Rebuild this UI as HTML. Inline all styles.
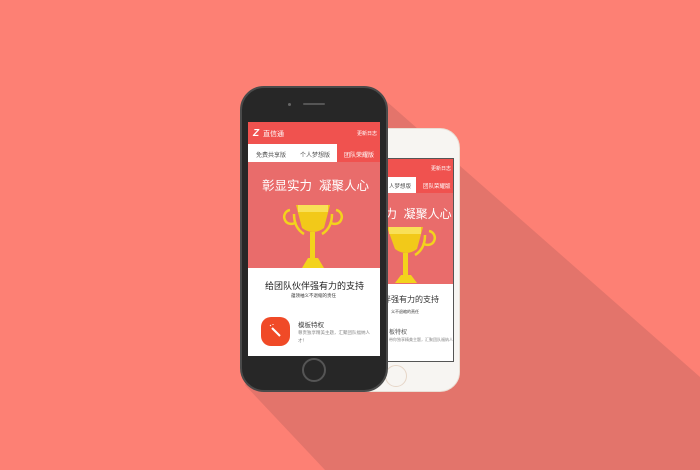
<!DOCTYPE html>
<html><head><meta charset="utf-8"><style>
*{margin:0;padding:0;box-sizing:border-box}
body{width:700px;height:470px;overflow:hidden;background:#fd8074;position:relative;font-family:"Liberation Sans","Noto Sans CJK SC",sans-serif}
.abs{position:absolute;white-space:nowrap}
</style></head><body>
<svg class="abs" style="left:0;top:0" width="700" height="470">
<polygon points="385,100 700,377 700,470 325,470 245,385" fill="#e3746b"/>
</svg>

<!-- white phone -->
<div class="abs" style="left:340px;top:128px;width:120px;height:264px;background:#f7f5f2;border-radius:20px;border:1px solid #eadfd5"></div>
<div class="abs" style="left:360px;top:158px;width:94px;height:204px;background:#fff;border:1px solid #555;overflow:hidden">
 <div class="abs" style="left:0;top:0;width:94px;height:18px;background:#f0524f;color:#fff;font-size:5px;text-align:right;padding:6px 4px 0 0">更新日志</div>
 <div class="abs" style="left:0;top:18px;width:94px;height:16px;background:#f0524f"></div>
 <div class="abs" style="left:0;top:18px;width:55px;height:16px;background:#fff;color:#555;font-size:5.5px;padding:5px 0 0 28px">人梦想版</div>
 <div class="abs" style="left:62px;top:23px;color:#fff;font-size:5.5px">团队荣耀版</div>
 <div class="abs" style="left:0;top:34px;width:94px;height:91px;background:#e96c6b"></div>
 <div class="abs" style="left:24px;top:46px;color:#fff;font-size:12px">力&nbsp;&nbsp;凝聚人心</div>
 <svg class="abs" style="left:12px;top:68px" width="70" height="58" viewBox="0 0 70 58">
  <path d="M56 4 a7 7 0 1 1 -6 12" stroke="#f3d31c" stroke-width="2.5" fill="none"/>
  <path d="M52 8 q0 14 -10 20" stroke="#f3d31c" stroke-width="2.5" fill="none"/>
  <path d="M14 0 H50 L44 22 Q33 30 22 22 Z" fill="#f2c919"/>
  <rect x="16" y="0" width="32" height="7" fill="#f9e057"/>
  <rect x="30" y="26" width="5" height="22" fill="#f3d31c"/>
  <path d="M22 56 L28 48 H38 L44 56 Z" fill="#f3d31c"/>
 </svg>
 <div class="abs" style="left:22px;top:135px;color:#333;font-size:8px">伴强有力的支持</div>
 <div class="abs" style="left:30px;top:150px;color:#333;font-size:4px">义不退缩的责任</div>
 <div class="abs" style="left:28px;top:168px;color:#555;font-size:6px">板特权</div>
 <div class="abs" style="left:28px;top:178px;color:#888;font-size:4px">带你独享精美主题，汇聚团队福纳人</div>
</div>
<div class="abs" style="left:385px;top:365px;width:22px;height:22px;border-radius:50%;border:1px solid #e6d6c8"></div>

<!-- black phone -->
<div class="abs" style="left:240px;top:86px;width:148px;height:306px;background:#272727;border-radius:24px;border:2px solid #4a4a4a"></div>
<div class="abs" style="left:288px;top:103px;width:3px;height:3px;border-radius:50%;background:#666"></div>
<div class="abs" style="left:303px;top:103px;width:22px;height:2px;border-radius:1px;background:#555"></div>
<div class="abs" style="left:302px;top:358px;width:24px;height:24px;border-radius:50%;border:2px solid #555"></div>
<div class="abs" style="left:248px;top:122px;width:132px;height:234px;background:#fff;overflow:hidden">
 <div class="abs" style="left:0;top:0;width:132px;height:22px;background:#f0524f"></div>
 <div class="abs" style="left:5px;top:6px;color:#fff;font-size:10px;font-weight:bold;font-style:italic">Z</div>
 <div class="abs" style="left:15px;top:7px;color:#fff;font-size:7px">直信通</div>
 <div class="abs" style="left:109px;top:8px;color:#fff;font-size:5px">更新日志</div>
 <div class="abs" style="left:0;top:22px;width:132px;height:18px;background:#fff"></div>
 <div class="abs" style="left:8px;top:28px;color:#555;font-size:6px">免费共享版</div>
 <div class="abs" style="left:52px;top:28px;color:#555;font-size:6px">个人梦想版</div>
 <div class="abs" style="left:89px;top:22px;width:43px;height:18px;background:#f0524f"></div>
 <div class="abs" style="left:96px;top:28px;color:#fff;font-size:6px">团队荣耀版</div>
 <div class="abs" style="left:0;top:40px;width:132px;height:106px;background:#e96c6b"></div>
 <div class="abs" style="left:14px;top:53px;color:#fff;font-size:12.5px">彰显实力&nbsp;&nbsp;凝聚人心</div>
 <svg class="abs" style="left:32px;top:80px" width="66" height="66" viewBox="0 0 66 66">
  <path d="M10 8 a7 7 0 1 0 6 12 M56 8 a7 7 0 1 1 -6 12" stroke="#f3d31c" stroke-width="2.5" fill="none"/>
  <path d="M14 12 q0 14 10 20 M52 12 q0 14 -10 20" stroke="#f3d31c" stroke-width="2.5" fill="none"/>
  <path d="M16 3 H50 L44 26 Q33 34 22 26 Z" fill="#f2c919"/>
  <rect x="18" y="3" width="30" height="7" fill="#f9e057"/>
  <rect x="30" y="30" width="5" height="26" fill="#f3d31c"/>
  <path d="M22 66 L28 56 H38 L44 66 Z" fill="#f3d31c"/>
 </svg>
 <div class="abs" style="left:17px;top:157px;color:#222;font-size:9px">给团队伙伴强有力的支持</div>
 <div class="abs" style="left:43px;top:171px;color:#333;font-size:4.5px">蕴领袖义不退缩的责任</div>
 <div class="abs" style="left:13px;top:195px;width:29px;height:29px;border-radius:10px;background:#f04a27"></div>
 <svg class="abs" style="left:19px;top:201px" width="17" height="17"><path d="M5 5 L13 13" stroke="#fff" stroke-width="2"/><path d="M3 2 l1 1 M6 1 l0 1" stroke="#fff"/></svg>
 <div class="abs" style="left:50px;top:197px;color:#444;font-size:6.5px">模板特权</div>
 <div class="abs" style="left:50px;top:207px;color:#888;font-size:4.5px;line-height:8px;width:72px;white-space:normal">尊贵独享精美主题，汇聚团队福纳人才！</div>
</div>
</body></html>
